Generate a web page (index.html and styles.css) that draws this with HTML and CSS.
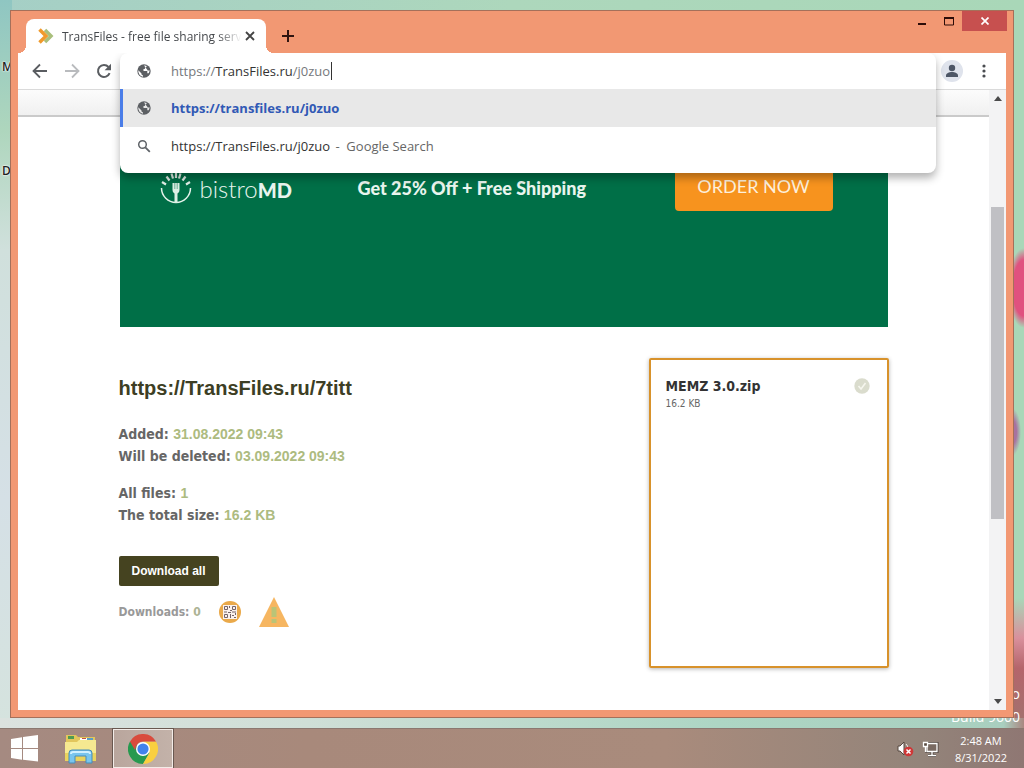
FILE: index.html
```
<!DOCTYPE html>
<html lang="en">
<head>
  <meta charset="UTF-8">
  <meta name="viewport" content="width=device-width, initial-scale=1.0">
  <title>TransFiles - free file sharing service</title>
  <link rel="stylesheet" href="styles.css">
</head>
<body>
  <main class="desktop">
    <span class="shortcut shortcut-m">M</span>
    <span class="shortcut shortcut-d">D</span>
    <div class="watermark">Windows 8.1 Pro<br>Build 9600</div>

    <section class="window">
      <header class="titlebar">
        <div class="tab">
          <svg class="favicon" viewBox="0 0 16 16" width="16" height="16">
            <path d="M7 2l6 6-6 6" fill="none" stroke="#a9bf7c" stroke-width="3.500"/>
            <path d="M1.500 1.500L8 8l-6.500 6.500" fill="none" stroke="#f09a2c" stroke-width="3.500"/>
          </svg>
          <span class="tab-title">TransFiles - free file sharing serv</span>
          <button class="tab-close" aria-label="Close tab">
            <svg viewBox="0 0 10 10" width="10" height="10"><path d="M1 1l8 8M9 1L1 9" stroke="#444" stroke-width="1.800"/></svg>
          </button>
        </div>
        <button class="new-tab" aria-label="New tab">
          <svg viewBox="0 0 12 12" width="12" height="12"><path d="M6 0v12M0 6h12" stroke="#301410" stroke-width="2"/></svg>
        </button>
        <div class="window-buttons">
          <button class="win-btn" aria-label="Minimize">
            <svg viewBox="0 0 12 12" width="12" height="12"><path d="M2 9h8" stroke="#2c0c08" stroke-width="2"/></svg>
          </button>
          <button class="win-btn" aria-label="Maximize">
            <svg viewBox="0 0 12 12" width="12" height="12"><path d="M1.500 3h9v7h-9z" fill="none" stroke="#2c0c08"/><path d="M1 3h10" stroke="#2c0c08" stroke-width="2"/></svg>
          </button>
          <button class="win-btn win-close" aria-label="Close">
            <svg viewBox="0 0 8 8" width="8" height="8"><path d="M.5 .5l7 7M7.500 .5l-7 7" stroke="#fff" stroke-width="1.700"/></svg>
          </button>
        </div>
      </header>

      <nav class="toolbar">
        <button class="tool" aria-label="Back">
          <svg viewBox="0 0 16 16" width="16" height="16"><path d="M15 8H2M8 1.500L1.500 8 8 14.500" fill="none" stroke="#5a5d61" stroke-width="1.800"/></svg>
        </button>
        <button class="tool" aria-label="Forward">
          <svg viewBox="0 0 16 16" width="16" height="16"><path d="M1 8h13M8 1.500L14.500 8 8 14.500" fill="none" stroke="#b9bbbe" stroke-width="1.800"/></svg>
        </button>
        <button class="tool" aria-label="Reload">
          <svg viewBox="0 0 16 16" width="16" height="16"><path d="M13.600 10.200A6 6 0 1 1 12.500 4" fill="none" stroke="#5a5d61" stroke-width="2"/><path d="M15 .8v6.400H8.600z" fill="#5a5d61"/></svg>
        </button>
        <div class="omnibox">
          <div class="popup">
            <label class="row">
              <svg class="row-icon" viewBox="0 0 14 14" width="14" height="14"><circle cx="7" cy="7" r="6.700" fill="#5c5f63"/><path d="M1.300 6.300L4.500 9.500v1l1.500 1v1.200A5.700 5.700 0 0 1 1.300 6.300zM7 1.400c1.500 0 2 .2 2.700.6-.2 1.300-.8 1.700-1.800 1.700v1.400H6.500V7h3.800v2.200h1.400A5.300 5.300 0 0 0 12.500 6c-.8 1-2 .7-2.400-.6" fill="#fff"/></svg>
              <span class="url"><input class="url-input" aria-label="Address" value="https://TransFiles.ru/j0zuo"><span class="url-text" aria-hidden="true">https://<b>TransFiles.ru</b>/j0zuo</span></span>
            </label>
            <a class="row selected" href="#">
              <svg class="row-icon" viewBox="0 0 14 14" width="14" height="14"><circle cx="7" cy="7" r="6.700" fill="#5c5f63"/><path d="M1.300 6.300L4.500 9.500v1l1.500 1v1.200A5.700 5.700 0 0 1 1.300 6.300zM7 1.400c1.500 0 2 .2 2.700.6-.2 1.300-.8 1.700-1.800 1.700v1.400H6.500V7h3.800v2.200h1.400A5.300 5.300 0 0 0 12.500 6c-.8 1-2 .7-2.400-.6" fill="#e8e8e8"/></svg>
              <span>https://transfiles.ru/j0zuo</span>
            </a>
            <a class="row" href="#">
              <svg class="row-icon" viewBox="0 0 14 14" width="14" height="14"><circle cx="5.500" cy="5.500" r="3.800" fill="none" stroke="#5f6368" stroke-width="1.500"/><path d="M8.300 8.300l4.500 4.500" stroke="#5f6368" stroke-width="1.800"/></svg>
              <span>https://TransFiles.ru/j0zuo <span class="hint">- &nbsp;Google Search</span></span>
            </a>
          </div>
        </div>
        <button class="tool" aria-label="Profile">
          <svg viewBox="0 0 22 22" width="22" height="22"><circle cx="11" cy="11" r="11" fill="#dfe3ec"/><circle cx="11" cy="8" r="3.200" fill="#4d5666"/><path d="M5 17v-1.500c0-2.200 3-3.500 6-3.500s6 1.300 6 3.500V17z" fill="#4d5666"/></svg>
        </button>
        <button class="tool" aria-label="Menu">
          <svg viewBox="0 0 4 14" width="4" height="14"><g fill="#4a4d51"><circle cx="2" cy="2" r="1.600"/><circle cx="2" cy="7" r="1.600"/><circle cx="2" cy="12" r="1.600"/></g></svg>
        </button>
      </nav>

      <div class="viewport">
        <div class="page">
          <div class="page-head"></div>
          <div class="content">
            <aside class="banner">
              <div class="brand">
                <svg viewBox="0 0 32 34" width="32" height="34">
                  <g fill="none" stroke="#e4f2ea">
                    <path d="M1.500 17a14.500 14.500 0 0 0 29 0" stroke-width="1.500"/>
                    <path d="M2 11l4 2.500M6.500 5.500l3 4M11.500 2.500l1.500 5M16 1v6M20.500 2.500l-1.500 5M25.500 5.500l-3 4M30 11l-4 2.500" stroke-width="2.200"/>
                  </g>
                  <path d="M12.500 12h7v7q0 3-2 3.500V32h-3v-9.500q-2-.5-2-3.500z" fill="#dcefe4"/>
                  <path d="M14.800 12v6M17.200 12v6" stroke="#4f9c7d" stroke-width=".8"/>
                </svg>
                <span class="brand-name">bistro<b>MD</b></span>
              </div>
              <span class="offer">Get 25% Off + Free Shipping</span>
              <button class="order">ORDER NOW</button>
            </aside>

            <div class="files">
              <section class="info">
                <h1>https://TransFiles.ru/7titt</h1>
                <p>Added: <span>31.08.2022 09:43</span><br>Will be deleted: <span>03.09.2022 09:43</span></p>
                <p>All files: <span>1</span><br>The total size: <span>16.2 KB</span></p>
                <button class="download">Download all</button>
                <div class="stats">
                  <span class="downloads">Downloads: <span>0</span></span>
                  <svg viewBox="0 0 22 22" width="22" height="22">
                    <circle cx="11" cy="11" r="11" fill="#eaa94a"/>
                    <path d="M4 4h14v14H4z" fill="#fbf1ec"/>
                    <g fill="none" stroke="#756468"><path d="M5.500 5.500h3v3h-3zM13.500 5.500h3v3h-3zM5.500 13.500h3v3h-3z"/><path d="M10.500 5v2M11 9.500h2M5 11h3M9 11.500h3M13 11h4M11.500 13v4M13 14.500h2M15 16.500h2M16.500 12v2"/></g>
                  </svg>
                  <svg viewBox="0 0 30 30" width="30" height="30">
                    <path d="M15 0l15 30H0z" fill="#f6b661"/>
                    <path d="M12.500 10h5v10h-5zM12.500 22h5v4h-5z" fill="#bac477"/>
                  </svg>
                </div>
              </section>
              <section class="card">
                <div>
                  <h2>MEMZ 3.0.zip</h2>
                  <small>16.2 KB</small>
                </div>
                <svg viewBox="0 0 16 16" width="16" height="16"><circle cx="8" cy="8" r="7.700" fill="#dadccd"/><path d="M4.500 8l2.500 3 4.500-6" fill="none" stroke="#f6f6ee" stroke-width="1.600"/></svg>
              </section>
            </div>
          </div>
        </div>
        <div class="scrollbar">
          <svg class="arrow" viewBox="0 0 17 17"><path d="M5 11l4-5 4 5z" fill="#4a4a4a"/></svg>
          <div class="track-above"></div>
          <div class="thumb"></div>
          <div class="track-below"></div>
          <svg class="arrow" viewBox="0 0 17 17"><path d="M5 6l4 5 4-5z" fill="#4a4a4a"/></svg>
        </div>
      </div>
    </section>
  </main>

  <footer class="taskbar">
    <button class="start" aria-label="Start">
      <svg viewBox="0 0 27 27" width="27" height="27"><path d="M0 4l11-1.700V13H0zM12 2.100L27 0v13H12zM0 14h11v10.700L0 23zM12 14h15v12.500L12 24.800z" fill="#fff"/></svg>
    </button>
    <button class="task" aria-label="File Explorer">
      <svg viewBox="0 0 32 30" width="32" height="30">
        <path d="M1 4V1h10l2 2h17v24H1z" fill="#e2c65c"/>
        <path d="M3 2h6v3H3z" fill="#4e9b52"/><path d="M15 4h7v3h-7z" fill="#fff"/><path d="M17 4h4v1h-4z" fill="#c55340"/><path d="M22 4h6v3h-6z" fill="#5c9fc5"/>
        <path d="M0 8h12l2-2h17v21H0z" fill="#f6e991"/>
        <path d="M0 19h31v8H0z" fill="#ead35d"/>
        <path d="M4 29V19q0-3 3-3h17q3 0 3 3v10h-6v-7H10v7z" fill="#79c5ee" stroke="#478db9"/>
        <path d="M6 20q0-2 2-2h15q2 0 2 2" fill="none" stroke="#d0f0ff" stroke-width="2"/>
      </svg>
    </button>
    <button class="task active" aria-label="Google Chrome">
      <svg viewBox="0 0 30 30" width="30" height="30">
        <path d="M2 7.500A15 15 0 0 0 15 30l6.500-11.200L15 15z" fill="#27994f"/>
        <path d="M15 30A15 15 0 0 0 28 7.500H15l6.500 11.300z" fill="#f9cf40"/>
        <path d="M2 7.500A15 15 0 0 1 28 7.500H15a7.500 7.500 0 0 0-7 5.500l-1 3z" fill="#d94b3d"/>
        <circle cx="15" cy="15" r="7" fill="#fff"/><circle cx="15" cy="15" r="5.600" fill="#4283ec"/>
      </svg>
    </button>
    <div class="tray">
      <svg viewBox="0 0 17 16" width="17" height="16"><path d="M1 5h2l4-4v13l-4-4H1z" fill="#fff" stroke="#55463f"/><path d="M9 3q2 2 2 4" fill="none" stroke="#eee"/><circle cx="11.500" cy="10.500" r="4.800" fill="#cf3737"/><path d="M9.500 8.500l4 4M13.500 8.500l-4 4" stroke="#fff" stroke-width="1.500"/></svg>
      <svg viewBox="0 0 17 16" width="17" height="16"><path d="M5 2.500h10v8H5zM10 11v3M6 14.500h8" fill="none" stroke="#4b403a" stroke-width="3"/><path d="M5 2.500h10v8H5zM10 11v3M6 14.500h8" fill="#796a62" stroke="#fff" stroke-width="1.300"/><path d="M1.500 1.500h4v4h-4zM3.500 6v5" fill="#57493f" stroke="#fff" stroke-width="1.300"/></svg>
      <time class="clock">2:48 AM<br>8/31/2022</time>
    </div>
  </footer>
</body>
</html>
```
FILE: styles.css
```
* {
  box-sizing: border-box;
}

body {
  display: flex;
  flex-direction: column;
  min-height: 100vh;
  margin: 0;
  font-family: "Open Sans", "Noto Sans", sans-serif;
  font-size: 13px;
}

button {
  display: flex;
  align-items: center;
  justify-content: center;
  padding: 0;
  border: none;
  background: none;
  font-family: inherit;
  cursor: pointer;
}

svg {
  display: block;
  flex-shrink: 0;
}

/* Desktop */
.desktop {
  position: relative;
  flex: 1;
  display: flex;
  padding: 10px;
  background:
    radial-gradient(ellipse 16px 40px at 100% 288px, #e0517f 70%, transparent 100%),
    radial-gradient(ellipse 9px 24px at 1012px 432px, #a772a0 50%, transparent 100%),
    linear-gradient(to right, #dbe2df, #cfdfd7 30%, #add6c4 70%, #a9cfbf 98%, #a98781) bottom / 100% 10px no-repeat,
    linear-gradient(to top, #a0736f, #b4656b 60px, #d9909c 90px, transparent 130px) right / 11px 100% no-repeat,
    linear-gradient(to bottom, #8fc6c2, #aed6bd 130px, #d0e0dc 250px, #d5e0e6 500px, #d5e3de) left / 12px 100% no-repeat,
    linear-gradient(to right, #a5cfc6, #add7bc 50%, #a9d7b8);
}

.shortcut {
  position: absolute;
  left: 2px;
  color: #222;
  font-size: 12px;
  font-weight: 600;
  text-shadow: 0 0 2px #fff, 0 0 2px #fff;
}

.shortcut-m {
  top: 58px;
}

.shortcut-d {
  top: 162px;
}

.watermark {
  position: absolute;
  right: 4px;
  bottom: 0;
  color: #fff;
  font-size: 14px;
  line-height: 23px;
  text-align: right;
}

.window {
  position: relative;
  flex: 1;
  display: flex;
  flex-direction: column;
  padding: 0 7px 7px;
  background: #f29873;
  border: 1px solid #a5705a;
}

/* Title bar */
.titlebar {
  display: flex;
  height: 42px;
  padding-left: 8px;
}

.tab {
  position: relative;
  display: flex;
  align-items: center;
  width: 240px;
  margin-top: 8px;
  padding: 0 11px 0 12px;
  background: #fff;
  border-radius: 8px 8px 0 0;
}

.tab::before,
.tab::after {
  content: "";
  position: absolute;
  bottom: 0;
  width: 8px;
  height: 8px;
}

.tab::before {
  right: 100%;
  background: radial-gradient(circle at 0 0, transparent 8px, #fff 8px);
}

.tab::after {
  left: 100%;
  background: radial-gradient(circle at 100% 0, transparent 8px, #fff 8px);
}

.tab-title {
  flex: 1;
  margin-left: 8px;
  white-space: nowrap;
  color: #45484c;
  font-size: 12px;
  -webkit-mask-image: linear-gradient(to right, #000 85%, transparent 98%);
  mask-image: linear-gradient(to right, #000 85%, transparent 98%);
}

.new-tab {
  width: 28px;
  margin: 8px 0 0 8px;
}

.window-buttons {
  display: flex;
  align-items: flex-start;
  margin: 0 -1px 0 auto;
}

.win-btn {
  width: 27px;
  height: 20px;
}

.win-close {
  width: 45px;
  background: #c7504f;
}

/* Toolbar */
.toolbar {
  display: flex;
  height: 37px;
  padding: 0 6px;
  background: #fff;
  border-bottom: 1px solid #dadada;
}

.tool {
  width: 32px;
}

.omnibox {
  position: relative;
  flex: 1;
}

.popup {
  position: absolute;
  z-index: 2;
  top: 0;
  left: 0;
  right: 0;
  padding-bottom: 9px;
  background: #fff;
  border-radius: 8px;
  box-shadow: 0 5px 9px rgba(0, 0, 0, 0.3);
  clip-path: inset(0 -20px -20px -20px);
}

.row {
  display: flex;
  align-items: center;
  gap: 20px;
  height: 37px;
  padding-left: 17px;
  color: #333;
  text-decoration: none;
  white-space: nowrap;
}

.row:first-child {
  height: 36px;
}

.selected {
  height: 38px;
  padding-left: 14px;
  background: #e8e8e8;
  border-left: 3px solid #4a7de8;
  color: #3159b5;
  font-weight: 700;
}

.hint {
  margin-left: 2px;
  color: #666;
}

.url {
  display: grid;
  flex: 1;
}

.url-input,
.url-text {
  grid-area: 1 / 1;
  justify-self: start;
  font: inherit;
}

/* the colored copy below carries the text, the input only takes typing */
.url-input {
  width: 100%;
  padding: 0;
  border: none;
  outline: none;
  background: none;
  color: transparent;
}

.url-text {
  padding-right: 1px;
  border-right: 1px solid #333;
  color: #75787c;
  pointer-events: none;
}

.url-text b {
  color: #333;
  font-weight: 400;
}

/* Page */
.viewport {
  flex: 1;
  display: flex;
  background: #fff;
}

.page {
  flex: 1;
}

.page-head {
  height: 27px;
  background: linear-gradient(#fcfcfc, #f0f0f0);
  border-bottom: 2px solid #cacaca;
}

.content {
  max-width: 770px;
  margin: 0 auto;
}

.banner {
  display: grid;
  grid-template-columns: 198px 1fr auto;
  align-items: start;
  margin: 48px 1px 0;
  min-height: 162px;
  padding: 0 55px 0 40px;
  background: #006f47;
  color: #e9f5ee;
  font-family: Lato, sans-serif;
}

.brand {
  display: flex;
  align-items: center;
  gap: 8px;
  padding-top: 6px;
}

.brand-name {
  font-size: 24px;
  font-weight: 300;
}

.brand-name b {
  font-size: 20px;
  font-weight: 900;
}

.offer {
  padding-top: 11px;
  font-size: 18px;
  font-weight: 900;
  line-height: 24px;
}

.order {
  width: 158px;
  height: 46px;
  padding-bottom: 4px;
  background: #f7931e;
  border-radius: 4px;
  color: #fdf0dc;
  font-size: 18px;
}

.files {
  display: grid;
  grid-template-columns: 1fr 240px;
  margin-top: 31px;
}

.info {
  padding-top: 18px;
  color: #666;
  font-family: "DejaVu Sans Condensed", "DejaVu Sans", sans-serif;
  font-size: 14px;
  font-weight: 700;
}

.info h1 {
  margin: 0 0 23px;
  color: #3d3e24;
  font-family: "Liberation Sans", Arial, sans-serif;
  font-size: 20px;
  line-height: 24px;
}

.info p {
  margin: 0 0 15px;
  line-height: 22px;
}

.info p span {
  color: #adbb80;
  font-family: "Liberation Sans", Arial, sans-serif;
}

.download {
  width: 100px;
  height: 30px;
  margin-top: 30px;
  background: #454320;
  border-radius: 2px;
  color: #fff;
  font-family: "Liberation Sans", Arial, sans-serif;
  font-size: 12px;
  font-weight: 700;
}

.stats {
  display: flex;
  align-items: center;
  gap: 18px;
  margin-top: 11px;
}

.downloads {
  color: #999;
  font-size: 12px;
}

.downloads span {
  color: #adb395;
}

.card {
  display: flex;
  justify-content: space-between;
  min-height: 310px;
  padding: 18px 17px 0 15px;
  border: 2px solid #d8922b;
  border-radius: 2px;
  box-shadow: 0 1px 4px rgba(0, 0, 0, 0.3);
  font-family: "DejaVu Sans Condensed", "DejaVu Sans", sans-serif;
}

.card h2 {
  margin: 0;
  color: #333;
  font-size: 14px;
  line-height: 17px;
}

.card small {
  display: block;
  color: #666;
  font-size: 10px;
  line-height: 18px;
}

.scrollbar {
  display: flex;
  flex-direction: column;
  width: 17px;
  padding: 0 2px;
  background: #f3f3f4;
}

.arrow {
  width: 17px;
  height: 17px;
  margin-left: -2px;
}

.track-above {
  flex: 100;
}

.thumb {
  flex: 312;
  background: #c0c0c4;
}

.track-below {
  flex: 174;
}

/* Taskbar */
.taskbar {
  display: flex;
  height: 40px;
  background: linear-gradient(to right, #a58a81, #a8897b 30%, #a98b7c 65%, #93847a 90%, #8f7773);
  border-top: 1px solid #8b7870;
}

.start {
  width: 48px;
}

.task {
  width: 60px;
  margin-left: 3px;
}

.task + .task {
  margin-left: 2px;
}

.active {
  background: linear-gradient(to right, #b9a69d, #c3b2a9);
  border: 1px solid #f3ece8;
  outline: 1px solid #695850;
}

.tray {
  display: flex;
  align-items: center;
  gap: 8px;
  margin-left: auto;
  padding-right: 17px;
  color: #fff;
}

.clock {
  margin-left: 8px;
  font-size: 11px;
  line-height: 17px;
  text-align: center;
}
```
